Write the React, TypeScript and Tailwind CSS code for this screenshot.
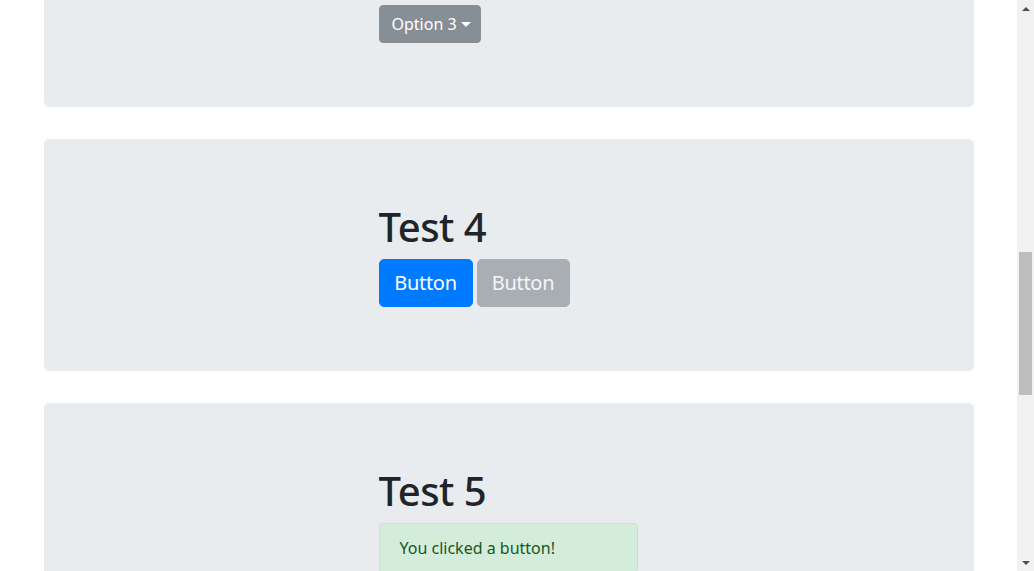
import React from "react";

function Card({ children, className = "" }: { children: React.ReactNode; className?: string }) {
  return (
    <div className={`mb-8 rounded-[5px] bg-[#e9ecef] py-16 pl-[335px] ${className}`}>{children}</div>
  );
}

export default function App() {
  return (
    <div
      className="flex h-[571px] w-[1034px] overflow-hidden bg-white text-[#212529]"
      style={{ fontFamily: '"Noto Sans", "Open Sans", sans-serif' }}
    >
      <div className="h-[571px] w-[1017px] overflow-hidden">
        <div className="mx-auto w-[930px]">
          <Card className="mt-[-115px]">
            <div className="mb-2 h-[48px]" />
            <button className="flex h-[38px] w-[102px] items-center rounded-[4px] border border-[#868e96] bg-[#868e96] pl-[12px] text-[16px] leading-6 text-white">
              Option 3
              <span className="ml-[4px] mt-[1px] h-0 w-0 border-x-[5px] border-t-[5px] border-x-transparent border-t-white" />
            </button>
          </Card>
          <Card>
            <h1 className="mb-2 text-[40px] font-medium leading-[48px] tracking-[-0.5px]">Test 4</h1>
            <div className="flex gap-[4px]">
              <button className="h-[48px] w-[94px] rounded-[5px] border border-[#007bff] bg-[#007bff] text-[20px] leading-[30px] tracking-[-0.3px] text-white">
                Button
              </button>
              <button className="h-[48px] w-[93px] rounded-[5px] border border-[#a9aeb3] bg-[#a9aeb3] text-[20px] leading-[30px] tracking-[-0.3px] text-[#f5f6f7]">
                Button
              </button>
            </div>
          </Card>
          <Card>
            <h1 className="mb-2 text-[40px] font-medium leading-[48px] tracking-[-0.5px]">Test 5</h1>
            <div className="w-[259px] rounded-[4px] border border-[#c3e6cb] bg-[#d4edda] px-5 py-3 text-[16px] leading-6 text-[#155724]">
              You clicked a button!
            </div>
          </Card>
        </div>
      </div>
      <div className="flex h-[571px] w-[17px] flex-col bg-[#f1f1f1]">
        <div className="flex h-[17px] items-center justify-center">
          <span className="h-0 w-0 border-x-[4px] border-b-[4px] border-x-transparent border-b-[#505050]" />
        </div>
        <div className="flex-1">
          <div className="ml-[2px] mt-[235px] h-[143px] w-[13px] bg-[#bdbdbd]" />
        </div>
        <div className="flex h-[17px] items-center justify-center">
          <span className="h-0 w-0 border-x-[4px] border-t-[4px] border-x-transparent border-t-[#505050]" />
        </div>
      </div>
    </div>
  );
}
